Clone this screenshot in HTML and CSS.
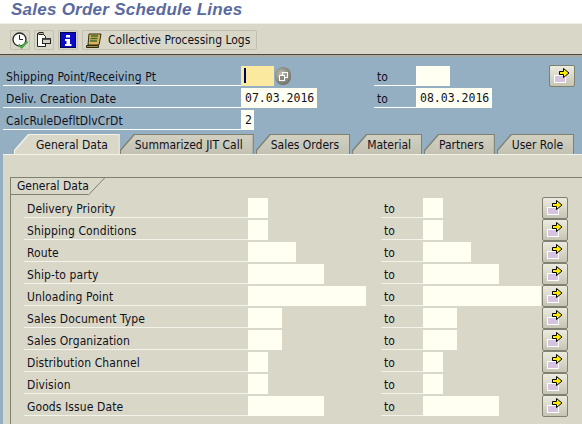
FILE: index.html
```html
<!DOCTYPE html>
<html lang="en">
<head>
    <meta charset="UTF-8">
    <title>Sales Order Schedule Lines</title>
    <link rel="stylesheet" href="styles.css">
</head>
<body>
    <svg class="defs" width="0" height="0">
        <symbol id="multi" viewBox="0 0 16 16">
            <rect x="0.5" y="7.5" width="11" height="7" fill="#d6c3e0" stroke="#fff"/>
            <path d="M5.500 3.500h4v-3l5.500 4.500-5.500 4.500v-3h-4z" fill="#ffec00" stroke="#000"/>
        </symbol>
    </svg>
    <div class="title">Sales Order Schedule Lines</div>
    <div class="toolbar">
        <div class="tool">
            <svg width="17" height="17" viewBox="0 0 17 17">
                <circle cx="7.500" cy="7.500" r="6.500" fill="#fff" stroke="#222" stroke-width="1.300"/>
                <path d="M7.500 3v4.500h3.500" fill="none" stroke="#222"/>
                <path d="M6.500 12.500l3 3 6-6" fill="none" stroke="#4fa64a" stroke-width="2.200"/>
            </svg>
        </div>
        <div class="tool">
            <svg width="16" height="16" viewBox="0 0 16 16">
                <path d="M1.500 1.500h5l3 3v10h-8z" fill="#fff" stroke="#222"/>
                <rect x="3" y="0.500" width="4" height="2" fill="#c9b98a" stroke="#222"/>
                <rect x="6.500" y="6.500" width="8" height="5" fill="#d5d4c4" stroke="#222"/>
                <rect x="6.500" y="6.500" width="8" height="1.500" fill="#555"/>
            </svg>
        </div>
        <div class="tool">
            <svg width="16" height="16" viewBox="0 0 16 16">
                <rect x="0.500" y="0.500" width="15" height="15" fill="#0a0ac8" stroke="#000050"/>
                <path d="M6 3h4v2.500h-4zM5 7h5v5h1.500v2h-6.500v-2h1.500v-3h-1.500z" fill="#fff"/>
            </svg>
        </div>
        <div class="tool tool-text">
            <svg width="16" height="16" viewBox="0 0 16 16">
                <path d="M3 2h12l-2 11h-11z" fill="#d8b25c" stroke="#2c2c10"/>
                <path d="M5 4h7M4.500 6.500h7M4 9h7" stroke="#3f6b2c" stroke-width="1.500"/>
                <path d="M0.500 13.500h12v2h-12z" fill="#a8864a" stroke="#2c2c10"/>
            </svg>
            <span>Collective Processing Logs</span>
        </div>
    </div>

    <div class="selection">
        <div class="row">
            <div class="label sel-label">Shipping Point/Receiving Pt</div>
            <div class="slot">
                <div class="field active w32"><i class="caret"></i></div>
                <div class="f4">
                    <svg width="9" height="9" viewBox="0 0 9 9">
                        <rect x="3.500" y="0.500" width="5" height="5" fill="none" stroke="#fff"/>
                        <rect x="0.500" y="3.500" width="5" height="5" fill="#8a8a80" stroke="#fff"/>
                    </svg>
                </div>
            </div>
            <div class="label to">to</div>
            <div class="slot"><div class="field w34"></div></div>
            <div class="multi"><svg width="16" height="16"><use href="#multi"/></svg></div>
        </div>
        <div class="row">
            <div class="label sel-label">Deliv. Creation Date</div>
            <div class="slot"><div class="field w76 mono">07.03.2016</div></div>
            <div class="label to">to</div>
            <div class="slot"><div class="field w76 mono">08.03.2016</div></div>
        </div>
        <div class="row">
            <div class="label sel-label">CalcRuleDefltDlvCrDt</div>
            <div class="slot"><div class="field w13 mono">2</div></div>
        </div>
    </div>

    <div class="tabs">
        <div class="tab current"><div class="tab-in">General Data</div></div>
        <div class="tab"><div class="tab-in">Summarized JIT Call</div></div>
        <div class="tab"><div class="tab-in">Sales Orders</div></div>
        <div class="tab"><div class="tab-in">Material</div></div>
        <div class="tab"><div class="tab-in">Partners</div></div>
        <div class="tab"><div class="tab-in">User Role</div></div>
    </div>

    <div class="panel">
        <div class="group">
            <div class="group-head">
                <span class="group-title">General Data</span>
                <svg width="17" height="18" viewBox="0 0 17 18"><path d="M0 17.500L16.500 0" fill="none" stroke="#7f7f72"/></svg>
            </div>
            <div class="group-rows">
                <div class="row">
                    <div class="label grp-label">Delivery Priority</div>
                    <div class="slot"><div class="field w20"></div></div>
                    <div class="label to">to</div>
                    <div class="slot short"><div class="field w20"></div></div>
                    <div class="multi"><svg width="16" height="16"><use href="#multi"/></svg></div>
                </div>
                <div class="row">
                    <div class="label grp-label">Shipping Conditions</div>
                    <div class="slot"><div class="field w20"></div></div>
                    <div class="label to">to</div>
                    <div class="slot short"><div class="field w20"></div></div>
                    <div class="multi"><svg width="16" height="16"><use href="#multi"/></svg></div>
                </div>
                <div class="row">
                    <div class="label grp-label">Route</div>
                    <div class="slot"><div class="field w48"></div></div>
                    <div class="label to">to</div>
                    <div class="slot short"><div class="field w48"></div></div>
                    <div class="multi"><svg width="16" height="16"><use href="#multi"/></svg></div>
                </div>
                <div class="row">
                    <div class="label grp-label">Ship-to party</div>
                    <div class="slot"><div class="field w76"></div></div>
                    <div class="label to">to</div>
                    <div class="slot short"><div class="field w76"></div></div>
                    <div class="multi"><svg width="16" height="16"><use href="#multi"/></svg></div>
                </div>
                <div class="row">
                    <div class="label grp-label">Unloading Point</div>
                    <div class="slot"><div class="field w118"></div></div>
                    <div class="label to">to</div>
                    <div class="slot short"><div class="field w118"></div></div>
                    <div class="multi"><svg width="16" height="16"><use href="#multi"/></svg></div>
                </div>
                <div class="row">
                    <div class="label grp-label">Sales Document Type</div>
                    <div class="slot"><div class="field w34"></div></div>
                    <div class="label to">to</div>
                    <div class="slot short"><div class="field w34"></div></div>
                    <div class="multi"><svg width="16" height="16"><use href="#multi"/></svg></div>
                </div>
                <div class="row">
                    <div class="label grp-label">Sales Organization</div>
                    <div class="slot"><div class="field w34"></div></div>
                    <div class="label to">to</div>
                    <div class="slot short"><div class="field w34"></div></div>
                    <div class="multi"><svg width="16" height="16"><use href="#multi"/></svg></div>
                </div>
                <div class="row">
                    <div class="label grp-label">Distribution Channel</div>
                    <div class="slot"><div class="field w20"></div></div>
                    <div class="label to">to</div>
                    <div class="slot short"><div class="field w20"></div></div>
                    <div class="multi"><svg width="16" height="16"><use href="#multi"/></svg></div>
                </div>
                <div class="row">
                    <div class="label grp-label">Division</div>
                    <div class="slot"><div class="field w20"></div></div>
                    <div class="label to">to</div>
                    <div class="slot short"><div class="field w20"></div></div>
                    <div class="multi"><svg width="16" height="16"><use href="#multi"/></svg></div>
                </div>
                <div class="row">
                    <div class="label grp-label">Goods Issue Date</div>
                    <div class="slot"><div class="field w76"></div></div>
                    <div class="label to">to</div>
                    <div class="slot short"><div class="field w76"></div></div>
                    <div class="multi"><svg width="16" height="16"><use href="#multi"/></svg></div>
                </div>
            </div>
        </div>
    </div>
</body>
</html>
```

FILE: styles.css
```css
html, body {
    margin: 0;
    padding: 0;
}
body {
    width: 582px;
    height: 424px;
    overflow: hidden;
    background-color: #94afc2;
    font-family: "DejaVu Sans Condensed", "DejaVu Sans", sans-serif;
    font-stretch: condensed;
    font-size: 12px;
    white-space: nowrap;
    color: #10101c;
}
.defs {
    display: block;
    height: 0;
}
.title {
    height: 23px;
    padding-left: 11px;
    background-color: #fff;
    font-family: "Liberation Sans", Arial, sans-serif;
    font-stretch: normal;
    font-size: 17px;
    line-height: 20px;
    font-weight: bold;
    font-style: italic;
    letter-spacing: 0.25px;
    color: #5b6a9e;
}
.toolbar {
    display: flex;
    gap: 4px;
    height: 32px;
    padding: 6px 0 0 10px;
    box-sizing: border-box;
    background-color: #d9d8c8;
    border-top: 1px solid #efeee6;
    border-bottom: 1px solid #4a4a44;
    box-shadow: 0 2px 0 #a9a99c;
}
.tool {
    display: flex;
    align-items: center;
    justify-content: center;
    width: 20px;
    height: 20px;
    box-sizing: border-box;
    border: 1px solid #c0bfb0;
    border-radius: 2px;
}
.tool-text {
    width: 175px;
    justify-content: flex-start;
    padding-left: 3px;
    gap: 6px;
}
.selection {
    padding: 11px 0 0 3px;
    height: 79px;
    box-sizing: border-box;
}
.row {
    display: flex;
    height: 20px;
    margin-bottom: 2px;
}
.label {
    box-sizing: border-box;
    height: 20px;
    line-height: 22px;
    letter-spacing: 0.1px;
    border-bottom: 1px solid #fff;
}
.sel-label {
    width: 238px;
    padding-left: 3px;
}
.slot {
    display: flex;
    width: 133px;
}
.slot.short {
    width: 119px;
}
.to {
    width: 42px;
    padding-left: 3px;
}
.field {
    height: 20px;
    background-color: #fffff2;
    flex-shrink: 0;
}
.mono {
    font-family: "DejaVu Sans Mono", monospace;
    font-stretch: normal;
    font-size: 11.5px;
    line-height: 20px;
    padding-left: 4px;
    box-sizing: border-box;
}
.w13 { width: 13px; }
.w20 { width: 20px; }
.w32 { width: 33px; }
.w34 { width: 34px; }
.w48 { width: 48px; }
.w76 { width: 76px; }
.w118 { width: 118px; }
.active {
    background-color: #fce9a0;
    padding: 2px 0 0 3px;
    box-sizing: border-box;
}
.caret {
    display: block;
    width: 2px;
    height: 15px;
    background-color: #000060;
}
.f4 {
    display: flex;
    align-items: center;
    justify-content: center;
    width: 16px;
    height: 18px;
    margin: 1px 0 0 1px;
    border-radius: 8px;
    background: radial-gradient(circle at 40% 40%, #c4c3b6, #55554e);
}
.multi {
    display: flex;
    align-items: center;
    justify-content: center;
    width: 26px;
    height: 22px;
    margin-top: -1px;
    box-sizing: border-box;
    border: 1px solid #7f7f72;
    border-radius: 2px;
    background: linear-gradient(#ecebdf, #c6c5b4);
}
.tabs {
    display: flex;
    gap: 2px;
    height: 20px;
    padding-left: 14px;
}
.tab {
    padding: 1px 1px 0 1px;
    background-color: #7f7f72;
    clip-path: polygon(14px 0, 100% 0, 100% 100%, 0 100%, 0 16px);
}
.tab-in {
    height: 19px;
    line-height: 21px;
    padding: 0 10px 0 14px;
    background: linear-gradient(#d2d1c1, #c3c2b2);
    clip-path: polygon(14px 0, 100% 0, 100% 100%, 0 100%, 0 16px);
}
.tab.current {
    background-color: #f4f3ea;
    margin-right: -2px;
}
.current .tab-in {
    padding: 0 11px 0 21px;
    background: #d9d8c8;
}
.panel {
    height: 270px;
    margin-left: 3px;
    padding: 22px 0 0 7px;
    box-sizing: border-box;
    background-color: #d9d8c8;
    border-top: 1px solid #f4f3ea;
}
.group {
    height: 247px;
    border-top: 1px solid #7f7f72;
    border-left: 1px solid #7f7f72;
}
.group-head {
    display: flex;
    height: 18px;
}
.group-title {
    width: 77px;
    height: 17px;
    line-height: 16px;
    padding-left: 6px;
    box-sizing: border-box;
    border-bottom: 1px solid #7f7f72;
}
.group-rows {
    padding: 2px 0 0 13px;
}
.grp-label {
    width: 224px;
    padding-left: 3px;
    border-bottom-color: #f4f3ea;
}
.group .to {
    border-bottom-color: #f4f3ea;
}
```
